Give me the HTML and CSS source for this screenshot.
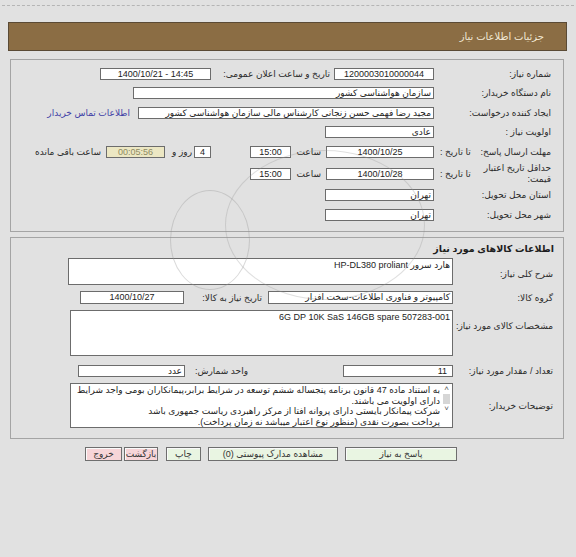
FILE: index.html
```html
<!DOCTYPE html>
<html lang="fa" dir="rtl">
<head>
<meta charset="utf-8">
<title>جزئیات اطلاعات نیاز</title>
<link rel="stylesheet" href="styles.css">
</head>
<body>
<div class="topline"></div>
<div class="titlebar">جزئیات اطلاعات نیاز</div>

<div class="panel p1">
  <div class="row">
    <div class="lab">شماره نیاز:</div>
    <div class="box c w100">1200003010000044</div>
    <div class="lab2 r1l">تاریخ و ساعت اعلان عمومی:</div>
    <div class="box c w111 ltr">1400/10/21 - 14:45</div>
  </div>
  <div class="row">
    <div class="lab">نام دستگاه خریدار:</div>
    <div class="box w301">سازمان هواشناسی کشور</div>
  </div>
  <div class="row">
    <div class="lab">ایجاد کننده درخواست:</div>
    <div class="box w296">مجید رضا فهمی حسن زنجانی کارشناس مالی سازمان هواشناسی کشور</div>
    <a class="link" href="#">اطلاعات تماس خریدار</a>
  </div>
  <div class="row">
    <div class="lab">اولویت نیاز :</div>
    <div class="box w109">عادی</div>
  </div>
  <div class="row">
    <div class="lab split"><span>مهلت ارسال پاسخ:</span><span class="sub">تا تاریخ :</span></div>
    <div class="box c w108">1400/10/25</div>
    <div class="txt saat">ساعت</div>
    <div class="box c w41">15:00</div>
    <div class="box c w17 days">4</div>
    <div class="txt ruz">روز و</div>
    <div class="box c w59 timer">00:05:56</div>
    <div class="txt remain">ساعت باقی مانده</div>
  </div>
  <div class="row tall">
    <div class="lab split"><span class="two">حداقل تاریخ اعتبار قیمت:</span><span class="sub">تا تاریخ :</span></div>
    <div class="box c w108">1400/10/28</div>
    <div class="txt saat">ساعت</div>
    <div class="box c w41">15:00</div>
  </div>
  <div class="row">
    <div class="lab">استان محل تحویل:</div>
    <div class="box w109">تهران</div>
  </div>
  <div class="row">
    <div class="lab">شهر محل تحویل:</div>
    <div class="box w109">تهران</div>
  </div>
</div>

<div class="panel p2">
  <div class="ptitle">اطلاعات کالاهای مورد نیاز</div>
  <div class="row2 ra">
    <div class="lab l2">شرح کلی نیاز:</div>
    <div class="box big w385 h27">هارد سرور HP-DL380 proliant</div>
  </div>
  <div class="row2 rb">
    <div class="lab l2">گروه کالا:</div>
    <div class="box w185">کامپیوتر و فناوری اطلاعات-سخت افزار</div>
    <div class="lab2 need">تاریخ نیاز به کالا:</div>
    <div class="box c w104">1400/10/27</div>
  </div>
  <div class="row2 rc">
    <div class="lab l2 up">مشخصات کالای مورد نیاز:</div>
    <div class="box big w383 h46">6G DP 10K SaS 146GB spare 507283-001</div>
  </div>
  <div class="row2 rd">
    <div class="lab l2">تعداد / مقدار مورد نیاز:</div>
    <div class="box w110 num">11</div>
    <div class="lab2 unit">واحد شمارش:</div>
    <div class="box w107">عدد</div>
  </div>
  <div class="row2 re">
    <div class="lab l2">توضیحات خریدار:</div>
    <div class="box ta w383">
      <div class="sbar"><span class="arr">&#708;</span><span class="thumb"></span><span class="arr">&#709;</span></div>
      <div class="tatext">
        <div>به استناد ماده 47 قانون برنامه پنجساله ششم توسعه در شرایط برابر،پیمانکاران بومی واجد شرایط</div>
        <div>دارای اولویت می باشند.</div>
        <div>شرکت پیمانکار بایستی دارای پروانه افتا از مرکز راهبردی ریاست جمهوری باشد</div>
        <div>پرداخت بصورت نقدی (منظور نوع اعتبار میباشد نه زمان پرداخت).</div>
      </div>
    </div>
  </div>
</div>

<div class="buttons">
  <button class="btn g b1">پاسخ به نیاز</button>
  <button class="btn g b2">مشاهده مدارک پیوستی (0)</button>
  <button class="btn g b3">چاپ</button>
  <button class="btn p b4">بازگشت</button>
  <button class="btn p b5">خروج</button>
</div>

<div class="wm" aria-hidden="true">
  <div class="wm-ring"></div>
  <div class="wm-ring2"></div>
</div>
</body>
</html>
```

FILE: styles.css
```css
* { box-sizing: border-box; }
html, body { margin: 0; padding: 0; }
body {
  background: #e1e1e1;
  font-family: "Liberation Sans", "DejaVu Sans", sans-serif;
  font-size: 9px;
  color: #222;
  direction: rtl;
  width: 576px;
  height: 557px;
  overflow: hidden;
  position: relative;
}
.topline {
  margin: 5px 2px 0 2px;
  border-top: 1px dashed #b5b5b5;
}
.titlebar {
  margin: 16px 9px 0 8px;
  height: 29px;
  background: #8b6d44;
  border: 1px solid #5a4a35;
  color: #f1e9d6;
  font-size: 10px;
  padding-right: 22px;
  display: flex;
  align-items: center;
}
.panel {
  margin-left: 10px;
  margin-right: 12px;
  border: 1px solid #a4a4a4;
}
.p1 {
  margin-top: 8px;
  padding-top: 4px;
  height: 173px;
}
.row {
  display: flex;
  align-items: center;
  height: 19.5px;
}
.row.tall { height: 24px; }
.lab {
  flex: none;
  width: 129px;
  padding-right: 12px;
  white-space: nowrap;
  color: #2a2a2a;
}
.lab.split {
  display: flex;
  justify-content: space-between;
  align-items: center;
  padding-left: 4px;
}
.lab .two {
  white-space: normal;
  width: 80px;
  line-height: 11px;
}
.lab .sub { padding-left: 2px; }
.box {
  flex: none;
  height: 12px;
  background: #fff;
  border: 1px solid #6c6c6c;
  line-height: 10px;
  padding: 0 2px;
  white-space: nowrap;
  overflow: hidden;
  color: #222;
}
.box.c { text-align: center; }
.box.ltr { direction: ltr; }
.w100 { width: 100px; }
.w111 { width: 111px; }
.w301 { width: 301px; }
.w296 { width: 296px; }
.w109 { width: 109px; }
.w108 { width: 108px; }
.w41 { width: 41px; }
.w17 { width: 17px; }
.w59 { width: 59px; }
.w385 { width: 385px; }
.w383 { width: 383px; }
.w185 { width: 185px; }
.w104 { width: 104px; }
.w110 { width: 110px; }
.w107 { width: 107px; }
.h27 { height: 27px; }
.h46 { height: 46px; }
.lab2 {
  flex: none;
  white-space: nowrap;
  color: #2a2a2a;
}
.r1l { width: 114px; margin-right: 4px; margin-left: 5px; }
.link {
  margin-right: 8px;
  color: #3f3fa6;
  text-decoration: none;
  white-space: nowrap;
}
.txt { flex: none; white-space: nowrap; color: #2a2a2a; }
.saat { width: 25px; margin-right: 5px; margin-left: 5px; }
.days { margin-right: 39px; }
.ruz { width: 20px; margin-right: 2px; }
.timer {
  margin-right: 7px;
  background: #ece7c3;
  color: #8d8a62;
}
.remain { margin-right: 5px; }

.p2 {
  margin-top: 5px;
  height: 202px;
  padding-top: 5px;
}
.ptitle {
  padding-right: 9px;
  font-weight: bold;
  font-size: 9.5px;
  height: 12px;
  line-height: 12px;
  color: #1e1e1e;
}
.row2 {
  display: flex;
  align-items: center;
}
.l2 { width: 110px; padding-right: 10px; }
.box.big { line-height: 11px; padding-top: 1px; }
.ra { margin-top: 3px; }
.ra .l2 { padding-top: 5px; }
.rb { margin-top: 6px; }
.rb .box { height: 13px; }
.need { width: 69px; margin-right: 6px; margin-left: 9px; }
.rc { margin-top: 6px; }
.rc .up { margin-top: -15px; }
.rd { margin-top: 9px; }
.num { padding-right: 5px; }
.unit { width: 60px; margin-right: 95px; margin-left: 3px; }
.re { margin-top: 6px; }
.box.ta {
  height: 45px;
  display: flex;
  padding: 0;
  line-height: 10.5px;
}
.sbar {
  flex: none;
  width: 9px;
  margin-right: 1px;
  display: flex;
  flex-direction: column;
  align-items: center;
  padding-top: 1px;
}
.arr {
  font-size: 8px;
  line-height: 8px;
  height: 8px;
  color: #555;
}
.thumb {
  width: 7px;
  height: 10px;
  background: #d6d6d6;
  margin: 1px 0;
}
.tatext {
  flex: 1;
  padding-right: 2px;
  padding-top: 1px;
  overflow: hidden;
}
.tatext div { white-space: nowrap; }

.buttons {
  display: flex;
  padding-right: 119px;
  margin-top: 8px;
}
.btn {
  flex: none;
  height: 14px;
  font-family: inherit;
  font-size: 9px;
  line-height: 12px;
  padding: 0;
  border: 1px solid #6e6e6e;
  box-shadow: inset 1px 1px 0 #fafafa;
  color: #333;
  text-align: center;
  direction: rtl;
  white-space: nowrap;
  overflow: hidden;
}
.btn.g { background: #e9f5e2; }
.btn.p { background: #f7d5d8; }
.b1 { width: 112px; }
.b2 { width: 130px; margin-right: 7px; }
.b3 { width: 35px; margin-right: 7px; }
.b4 { width: 34px; margin-right: 8px; }
.b5 { width: 37px; margin-right: 2px; }

.wm {
  position: absolute;
  left: 0;
  top: 0;
  width: 576px;
  height: 557px;
  pointer-events: none;
}
.wm-ring {
  position: absolute;
  left: 170px;
  top: 190px;
  width: 80px;
  height: 100px;
  border: 1.5px solid rgba(150, 150, 150, 0.35);
  border-radius: 50%;
}
.wm-ring2 {
  position: absolute;
  left: 225px;
  top: 150px;
  width: 200px;
  height: 150px;
  border: 1.5px solid rgba(150, 150, 150, 0.3);
  border-radius: 50%;
}
```
